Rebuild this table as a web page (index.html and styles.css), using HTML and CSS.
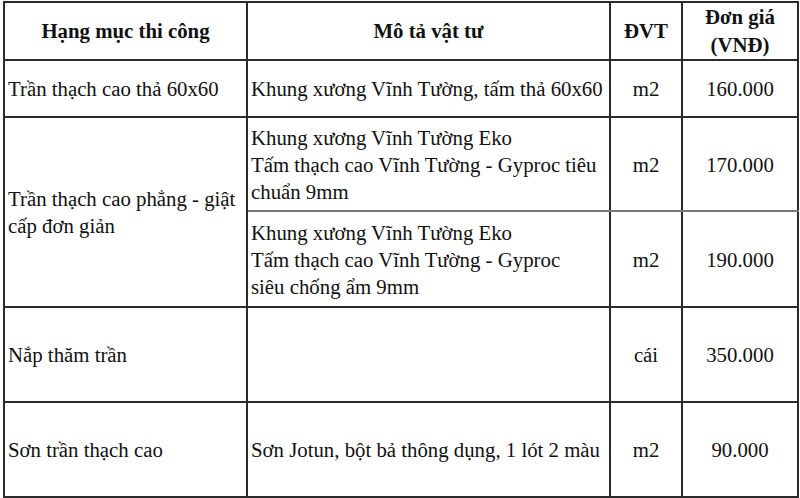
FILE: index.html
```html
<!DOCTYPE html>
<html lang="vi">
<head>
<meta charset="utf-8">
<title>Bảng giá trần thạch cao</title>
<link rel="stylesheet" href="styles.css">
</head>
<body>
<table class="price-table">
  <colgroup>
    <col class="c-item">
    <col class="c-desc">
    <col class="c-unit">
    <col class="c-price">
  </colgroup>
  <thead>
    <tr class="r-head">
      <th>Hạng mục thi công</th>
      <th>Mô tả vật tư</th>
      <th>ĐVT</th>
      <th>Đơn giá<br>(VNĐ)</th>
    </tr>
  </thead>
  <tbody>
    <tr class="r-1">
      <td class="item">Trần thạch cao thả 60x60</td>
      <td class="desc">Khung xương Vĩnh Tường, tấm thả 60x60</td>
      <td class="num">m2</td>
      <td class="num">160.000</td>
    </tr>
    <tr class="r-2a">
      <td class="item" rowspan="2">Trần thạch cao phẳng - giật cấp đơn giản</td>
      <td class="desc sub-top">Khung xương Vĩnh Tường Eko<br>Tấm thạch cao Vĩnh Tường - Gyproc tiêu chuẩn 9mm</td>
      <td class="num sub-top">m2</td>
      <td class="num sub-top">170.000</td>
    </tr>
    <tr class="r-2b">
      <td class="desc">Khung xương Vĩnh Tường Eko<br>Tấm thạch cao Vĩnh Tường - Gyproc<br>siêu chống ẩm 9mm</td>
      <td class="num">m2</td>
      <td class="num">190.000</td>
    </tr>
    <tr class="r-3">
      <td class="item">Nắp thăm trần</td>
      <td class="desc"></td>
      <td class="num">cái</td>
      <td class="num">350.000</td>
    </tr>
    <tr class="r-4">
      <td class="item">Sơn trần thạch cao</td>
      <td class="desc">Sơn Jotun, bột bả thông dụng, 1 lót 2 màu</td>
      <td class="num">m2</td>
      <td class="num">90.000</td>
    </tr>
  </tbody>
</table>
</body>
</html>
```

FILE: styles.css
```css
html, body {
  margin: 0;
  padding: 0;
  background: #ffffff;
}

body {
  padding: 1px 0 0 3px;
  font-family: "Liberation Serif", "Times New Roman", serif;
  color: #111111;
}

.price-table {
  border-collapse: collapse;
  table-layout: fixed;
  width: 794px;
  font-size: 20.8px;
  line-height: 27px;
}

.c-item { width: 243px; }
.c-desc { width: 363px; }
.c-unit { width: 72px; }
.c-price { width: 116px; }

.price-table th,
.price-table td {
  border: 2px solid #2b2b2b;
  padding: 0 3px;
  vertical-align: middle;
}

.price-table td.desc {
  padding-right: 0;
}

.price-table th {
  font-weight: bold;
  text-align: center;
  line-height: 28px;
}

.r-head { height: 56px; }
.r-1 { height: 57px; }
.r-2a { height: 94px; }
.r-2b { height: 96px; }
.r-3 { height: 95px; }
.r-4 { height: 95px; }

.item { text-align: left; }
.desc { text-align: left; }
.num { text-align: center; }

.price-table td.sub-top {
  border-bottom-color: #777777;
}
```
